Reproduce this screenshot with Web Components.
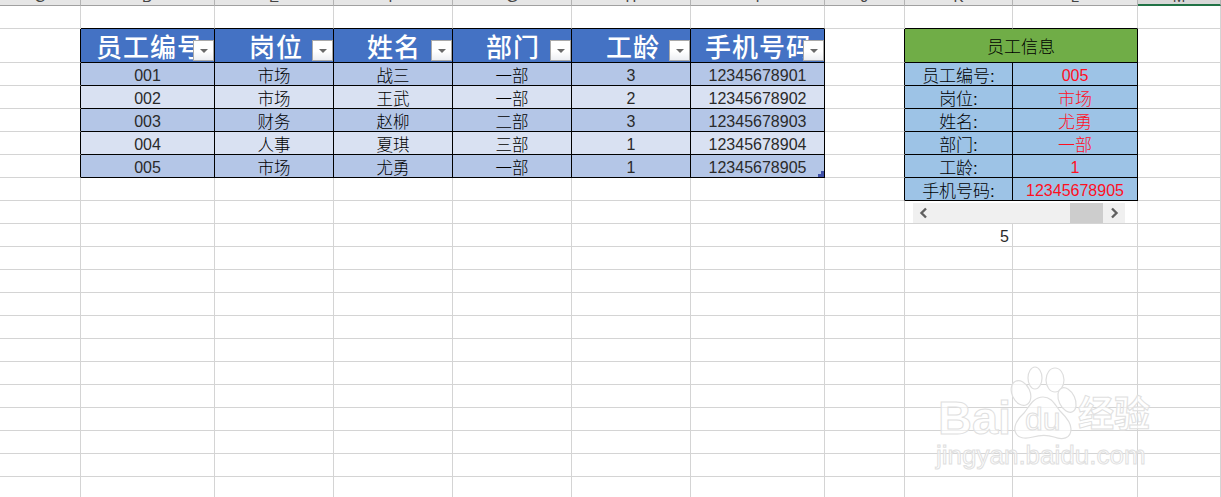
<!DOCTYPE html>
<html><head><meta charset="utf-8"><style>html,body{margin:0;padding:0;background:#fff;overflow:hidden}</style></head><body>
<x-sheet></x-sheet>
<script>
const F='"Liberation Sans","Noto Sans CJK SC",sans-serif';
class XFilter extends HTMLElement{constructor(){super();this.attachShadow({mode:'open'}).innerHTML=`<style>:host{position:absolute;right:0;bottom:1px;width:21px;height:21px;box-sizing:border-box;border:1px solid #a9a9a9;background:linear-gradient(#fff,#fff 55%,#eceef2);display:flex;align-items:center;justify-content:center}i{width:0;height:0;border:4px solid transparent;border-top:4px solid #6a6a6a;border-bottom:0;margin-top:1px}</style><i></i>`}}
customElements.define('x-filter',XFilter);
class XCell extends HTMLElement{constructor(){super();this.attachShadow({mode:'open'}).innerHTML=`<style>:host{display:flex;position:relative;box-sizing:border-box;align-items:center;justify-content:center;overflow:hidden;white-space:nowrap;border-right:1px solid var(--br,#d4d4d4);border-bottom:1px solid var(--bb,#d4d4d4);background:var(--bg,#fff);color:var(--fg,#2a2a2a);font:var(--fw,300) var(--fs,16px)/1 ${F};padding-top:4px}</style><slot></slot>`}}
customElements.define('x-cell',XCell);
class XScroll extends HTMLElement{constructor(){super();this.attachShadow({mode:'open'}).innerHTML=`<style>:host{display:flex;align-items:stretch;width:212px;height:20px;background:#f0f0f0;margin:0 0 0 8px}b{flex:none;width:21px;display:flex;align-items:center;justify-content:center}s{flex:1}u{flex:none;width:33px;background:#cdcdcd;margin-right:1px}</style><b><svg width="9" height="12" viewBox="0 0 9 12"><path d="M7 1.5 2.5 6 7 10.5" fill="none" stroke="#606060" stroke-width="2.4"/></svg></b><s></s><u></u><b><svg width="9" height="12" viewBox="0 0 9 12"><path d="M2 1.5 6.5 6 2 10.5" fill="none" stroke="#606060" stroke-width="2.4"/></svg></b>`}}
customElements.define('x-scroll',XScroll);
class XMark extends HTMLElement{constructor(){super();this.attachShadow({mode:'open'}).innerHTML=`<style>:host{position:absolute;left:936px;top:365px;width:222px;height:125px;pointer-events:none}
.t{position:absolute;color:rgba(255,255,255,.6);-webkit-text-stroke:1px #e0e0e0;white-space:nowrap;line-height:1;font-family:"Liberation Sans","Noto Sans CJK SC",sans-serif}
</style><svg style="position:absolute;left:0;top:0" width="222" height="125" viewBox="0 0 222 125" fill="rgba(255,255,255,.7)" stroke="#dedede" stroke-width="1.2"><ellipse cx="99" cy="13" rx="7" ry="11"/><ellipse cx="119" cy="15" rx="9" ry="12"/><ellipse cx="85" cy="28" rx="9" ry="13" transform="rotate(-25 85 28)"/><ellipse cx="131" cy="35" rx="8" ry="13" transform="rotate(-25 131 35)"/><path d="M107 32C97 32 93 42 88 48C80 55 78 62 79 66C81 74 90 74 97 72C104 70 112 70 118 72C126 75 135 74 135 64C135 56 128 50 124 46C119 40 116 32 107 32Z"/></svg>
<span class="t" style="left:2px;top:29px;font-size:47px;font-weight:700">Bai</span><span class="t" style="left:89px;top:38px;font-size:32px">du</span><span class="t" style="left:142px;top:32px;font-size:36px;font-weight:700">经验</span><span class="t" style="left:0;top:77px;font-size:26px">jingyan.baidu.com</span>`}}
customElements.define('x-mark',XMark);
class XColhead extends HTMLElement{constructor(){super();this.attachShadow({mode:'open'}).innerHTML=`<style>:host{display:block;box-sizing:border-box;position:relative;overflow:hidden;border-right:1px solid #b4b4b4;border-bottom:var(--bw,1px) solid var(--bb,#a0a0a0);background:var(--bg,#e6e6e6);color:#444;font:15px/1 ${F};text-align:center}span{display:block;margin-top:-11px}</style><span><slot></slot></span>`}}
customElements.define('x-colhead',XColhead);
class XSheet extends HTMLElement{constructor(){super();const r=this.attachShadow({mode:'open'});
const cols=[81,134,119,119,119,119,134,80,108,125,83];
const rows=[6,23,34];while(rows.length<22)rows.push(23);
r.innerHTML=`<style>:host{display:block;position:relative;width:1221px;height:497px;overflow:hidden}#g{display:grid;grid-template-columns:${cols.map(c=>c+'px').join(' ')};grid-template-rows:${rows.map(c=>c+'px').join(' ')}}</style><div id="g"></div><x-mark></x-mark>`;
const g=r.getElementById('g');
const tbl=[['员工编号','岗位','姓名','部门','工龄','手机号码'],
['001','市场','战三','一部','3','12345678901'],['002','市场','王武','一部','2','12345678902'],['003','财务','赵柳','二部','3','12345678903'],['004','人事','夏琪','三部','1','12345678904'],['005','市场','尤勇','一部','1','12345678905']];
const info=[['员工信息',''],['员工编号:','005'],['岗位:','市场'],['姓名:','尤勇'],['部门:','一部'],['工龄:','1'],['手机号码:','12345678905']];
const K='#000',pad=[15,34,33,33,34,14];
const cjk=/[\u4e00-\u9fff]/;
['C','D','E','F','G','H','I','J','K','L','M'].forEach((t,i)=>{const c=document.createElement('x-colhead');c.textContent=t;if(i==10){c.style.setProperty('--bb','#217346');c.style.setProperty('--bw','2px');c.style.setProperty('--bg','#d8d8d8');}g.append(c)});
for(let y=1;y<rows.length;y++)for(let x=0;x<11;x++){
 if((y==9||y==2)&&x==9)continue;
 const c=document.createElement('x-cell'),st=c.style;let txt='';
 const set=(k,v)=>st.setProperty(k,v);
 if(y==1&&(x>=1&&x<=6||x==8||x==9))set('--bb',K);
 if(x==0&&y>=2&&y<=7)set('--br',K);
 if(x==7&&y>=2&&y<=8)set('--br',K);
 if(x>=1&&x<=6&&y>=2&&y<=7){
  const ty=y-2;txt=tbl[ty][x-1];set('--br',K);set('--bb',K);
  if(ty==0){set('--bg','#4472c4');set('--fg','#fff');set('--fs','26px');set('--fw','500');st.justifyContent='flex-start';st.paddingLeft=pad[x-1]+'px';st.letterSpacing='1px';}
  else set('--bg',ty%2?'#b4c6e7':'#d9e1f2');
  if(ty>0&&cjk.test(txt)){set('--fs','16.5px');set('--fg','#000');}
 }
 if((x==8||x==9)&&y>=2&&y<=8){
  const iy=y-2;set('--br',K);set('--bb',K);txt=info[iy][x-8];
  if(iy==0){st.gridColumn='9 / span 2';set('--bg','#70ad47');}
  else{set('--bg','#9dc3e6');if(x==9)set('--fg','#ff0f1f');}
  if(cjk.test(txt)){set('--fs','17px');if(x==8)set('--fg','#000');}
 }
 if(y==9&&x==8){st.gridColumn='9 / span 2';st.display='block';st.paddingTop='2px';c.append(document.createElement('x-scroll'));}
 if(y==10&&x==8){st.justifyContent='flex-end';txt='5';st.paddingRight='3px';}
 if(txt)c.append(txt);
 if(y==2&&x>=1&&x<=6)c.append(document.createElement('x-filter'));
 if(x==6&&y==7){const h=document.createElement('i');h.style.cssText='position:absolute;right:0;bottom:0;width:6px;height:6px;background:#3f50a8;clip-path:polygon(100% 0,100% 100%,0 100%,0 50%,50% 50%,50% 0)';c.append(h)}
 g.append(c);
}
}}
customElements.define('x-sheet',XSheet);
</script></body></html>
